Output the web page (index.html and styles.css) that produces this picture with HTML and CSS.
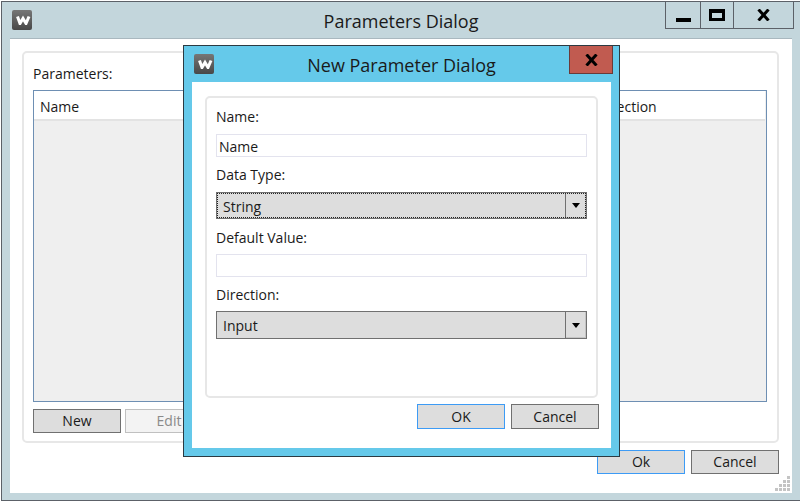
FILE: index.html
```html
<!DOCTYPE html>
<html lang="en">

<head>
    <meta charset="UTF-8" />
    <title>Parameters Dialog</title>
    <link rel="stylesheet" href="styles.css">
</head>

<body>
    <div class="window">
        <div class="titlebar">
            <svg class="app-icon" viewBox="0 0 20 20">
                <defs>
                    <linearGradient id="icon-bg" x1="0" y1="0" x2="0" y2="1">
                        <stop offset="0" stop-color="#767676" />
                        <stop offset="1" stop-color="#484848" />
                    </linearGradient>
                    <filter id="icon-blur">
                        <feGaussianBlur stdDeviation="0.45" />
                    </filter>
                </defs>
                <rect width="20" height="20" rx="2" fill="url(#icon-bg)" />
                <polyline points="5.5,6.5 8,13.5 11,8.5 14,13.5 17,6.5" fill="none" stroke="#fff" stroke-width="3" filter="url(#icon-blur)" />
            </svg>
            <div class="title">Parameters Dialog</div>
            <div class="caption-buttons">
                <div class="caption-btn btn-min"><span class="min-icon"></span></div>
                <div class="caption-btn btn-max"><span class="max-icon"></span></div>
                <div class="caption-btn btn-close">
                    <svg class="x-icon" viewBox="0 0 13 12">
                        <path d="M1.5 0.5 L11.5 11.5 M11.5 0.5 L1.5 11.5" stroke="#000" stroke-width="3" />
                    </svg>
                </div>
            </div>
        </div>
        <div class="pane">
            <div class="group">
                <div class="group-label">Parameters:</div>
                <div class="list">
                    <div class="list-header">
                        <span class="col-name">Name</span>
                        <span class="col-direction">Direction</span>
                    </div>
                    <div class="list-body"></div>
                </div>
                <div class="list-buttons">
                    <button class="btn">New</button>
                    <button class="btn btn-disabled">Edit</button>
                </div>
            </div>
            <div class="footer">
                <button class="btn btn-default">Ok</button>
                <button class="btn">Cancel</button>
            </div>
            <svg class="grip" viewBox="0 0 15 15">
                <path d="M12 0h3v3h-3z M8 4h3v3H8z M12 4h3v3h-3z M4 8h3v3H4z M8 8h3v3H8z M12 8h3v3h-3z M0 12h3v3H0z M4 12h3v3H4z M8 12h3v3H8z M12 12h3v3h-3z" fill="#c4c4c4" />
            </svg>
        </div>
    </div>

    <div class="dialog">
        <div class="dialog-titlebar">
            <svg class="app-icon" viewBox="0 0 20 20">
                <rect width="20" height="20" rx="2" fill="url(#icon-bg)" />
                <polyline points="5.5,6.5 8,13.5 11,8.5 14,13.5 17,6.5" fill="none" stroke="#fff" stroke-width="3" filter="url(#icon-blur)" />
            </svg>
            <div class="title">New Parameter Dialog</div>
            <div class="dialog-close">
                <svg class="x-icon" viewBox="0 0 13 12">
                    <path d="M1.5 0.5 L11.5 11.5 M11.5 0.5 L1.5 11.5" stroke="#000" stroke-width="3" />
                </svg>
            </div>
        </div>
        <div class="dialog-pane">
            <div class="form-box">
                <label class="field-label label-name">Name:</label>
                <div class="text-input">Name</div>
                <label class="field-label label-type">Data Type:</label>
                <div class="combo combo-focus">
                    <span class="combo-value">String</span>
                    <span class="combo-arrow"><span class="arrow"></span></span>
                </div>
                <label class="field-label label-default">Default Value:</label>
                <div class="text-input"></div>
                <label class="field-label label-direction">Direction:</label>
                <div class="combo combo-tall">
                    <span class="combo-value">Input</span>
                    <span class="combo-arrow"><span class="arrow"></span></span>
                </div>
            </div>
            <div class="dialog-footer">
                <button class="btn btn-default">OK</button>
                <button class="btn">Cancel</button>
            </div>
        </div>
    </div>
</body>

</html>
```

FILE: styles.css
```css
:root {
    --frame: #c3d6dc;
    --frame-border: #5c6168;
    --dialog-frame: #65c9ea;
    --btn-bg: #dddddd;
    --btn-border: #707070;
    --soft-border: #e7e7e7;
    --input-border: #e3e3ee;
}

* {
    box-sizing: border-box;
}

html,
body {
    height: 100%;
}

body {
    margin: 0;
    padding: 1px 0 0 1px;
    background: #fff;
    overflow: hidden;
    font-family: 'Open Sans', 'Noto Sans', sans-serif;
    font-size: 14px;
    color: #1a1a1a;
}

.window {
    height: 500px;
    background: var(--frame);
    border: 1px solid var(--frame-border);
    border-right: none;
    padding: 0 8px 7px 8px;
    display: flex;
    flex-direction: column;
}

.titlebar {
    height: 36px;
    display: flex;
    align-items: flex-start;
    position: relative;
    flex-shrink: 0;
}

.app-icon {
    width: 20px;
    height: 20px;
    margin: 8px 0 0 2px;
}

.title {
    position: absolute;
    left: 0;
    right: 0;
    top: 7px;
    text-align: center;
    font-size: 18px;
    line-height: 25px;
}

.caption-buttons {
    margin-left: auto;
    margin-right: -2px;
    height: 27px;
    display: flex;
    border: 1px solid var(--frame-border);
    border-top: none;
    position: relative;
}

.caption-btn {
    display: flex;
    align-items: center;
    justify-content: center;
}

.btn-min {
    width: 35px;
    border-right: 1px solid var(--frame-border);
}

.btn-max {
    width: 33px;
    border-right: 1px solid var(--frame-border);
}

.btn-close {
    width: 59px;
}

.min-icon {
    width: 15px;
    height: 4px;
    margin-top: 10px;
    background: #000;
}

.max-icon {
    width: 16px;
    height: 12px;
    border: 3px solid #000;
    border-top-width: 4px;
}

.x-icon {
    width: 13px;
    height: 12px;
}

.pane {
    flex: 1;
    background: #fff;
    border-top: 1px solid #a9b8bf;
    padding: 12px 13px 19px 12px;
    display: flex;
    flex-direction: column;
    position: relative;
}

.group {
    flex: 1;
    border: 2px solid var(--soft-border);
    border-radius: 5px;
    padding: 9px 10px 8px 9px;
    display: flex;
    flex-direction: column;
}

.group-label {
    line-height: 23px;
    height: 28px;
}

.list {
    flex: 1;
    border: 1px solid #6e8fb3;
    background: #efefef;
    display: flex;
    flex-direction: column;
}

.list-header {
    height: 30px;
    background: #fff;
    border-bottom: 2px solid #e3e3e3;
    margin-right: 1px;
    padding-left: 6px;
    line-height: 32px;
    display: flex;
}

.col-direction {
    margin-left: 518px;
}

.list-body {
    flex: 1;
}

.list-buttons {
    display: flex;
    gap: 4px;
    margin-top: 7px;
}

.btn {
    width: 88px;
    height: 24px;
    padding: 0 0 1px;
    font: inherit;
    color: inherit;
    background: var(--btn-bg);
    border: 1px solid var(--btn-border);
}

.btn-disabled {
    background: #f3f3f3;
    border-color: #c0c0c0;
    color: #8a8a8a;
}

.btn-default {
    border-color: #3d9bf5;
}

.footer {
    display: flex;
    justify-content: flex-end;
    gap: 6px;
    margin-top: 7px;
}

.grip {
    position: absolute;
    right: 2px;
    bottom: 2px;
    width: 15px;
    height: 15px;
}

.dialog {
    position: absolute;
    left: 183px;
    top: 45px;
    width: 437px;
    height: 412px;
    background: var(--dialog-frame);
    border: 1px solid #2b3a42;
    padding: 0 8px 8px;
    display: flex;
    flex-direction: column;
}

.dialog-titlebar {
    height: 36px;
    position: relative;
    display: flex;
    flex-shrink: 0;
}

.dialog-titlebar .app-icon {
    margin: 8px 0 0 2px;
}

.dialog-close {
    margin-left: auto;
    margin-right: -2px;
    width: 44px;
    height: 28px;
    background: #c15b50;
    border: 1px solid #6a3a38;
    border-top: none;
    display: flex;
    align-items: center;
    justify-content: center;
    position: relative;
}

.dialog-pane {
    flex: 1;
    background: #fff;
    padding: 14px 13px 19px 13px;
    display: flex;
    flex-direction: column;
}

.form-box {
    height: 302px;
    border: 2px solid var(--soft-border);
    border-radius: 5px;
    padding: 9px 9px 0;
    display: flex;
    flex-direction: column;
}

.field-label {
    line-height: 20px;
}

.label-name {
    margin-bottom: 7px;
}

.label-type {
    margin-top: 8px;
    margin-bottom: 7px;
}

.label-default {
    margin-top: 9px;
    margin-bottom: 6px;
}

.label-direction {
    margin-top: 8px;
    margin-bottom: 6px;
}

.text-input {
    height: 23px;
    border: 1px solid var(--input-border);
    padding-left: 2px;
    line-height: 24px;
}

.combo {
    height: 27px;
    background: var(--btn-bg);
    border: 1px solid var(--btn-border);
    display: flex;
    line-height: 27px;
}

.combo-tall {
    height: 28px;
}

.combo-value {
    flex: 1;
    padding-left: 6px;
}

.combo-arrow {
    width: 21px;
    border-left: 1px solid var(--btn-border);
    box-shadow: inset -1px -1px 0 #c4c4c4;
    display: flex;
    align-items: center;
    justify-content: center;
}

.arrow {
    width: 0;
    height: 0;
    border-left: 4.5px solid transparent;
    border-right: 4.5px solid transparent;
    border-top: 5px solid #000;
}

.combo-focus {
    outline: 1px dotted #222;
    outline-offset: -2px;
}

.dialog-footer {
    display: flex;
    justify-content: flex-end;
    gap: 6px;
    margin-top: 6px;
    margin-right: -1px;
}

.dialog-footer .btn {
    height: 25px;
    padding: 0;
}
```
